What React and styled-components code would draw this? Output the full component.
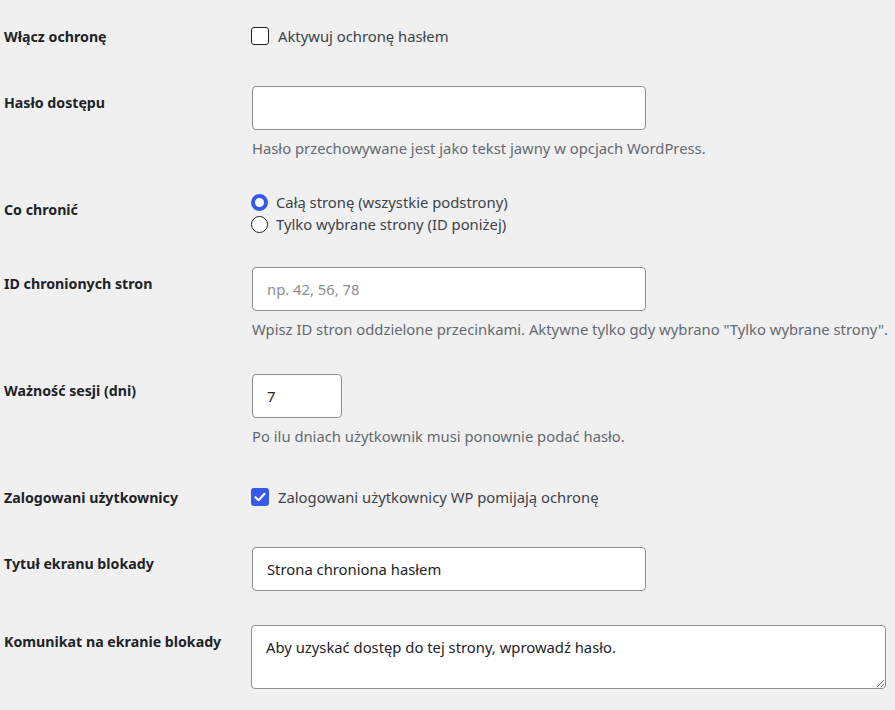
import React from "react";
import styled, { createGlobalStyle } from "styled-components";

const GlobalStyle = createGlobalStyle`
  html, body {
    margin: 0;
    padding: 0;
    background: #f0f0f1;
  }
  body {
    font-family: "Noto Sans", "Open Sans", sans-serif;
    font-size: 14.8px;
    color: #3c434a;
  }
`;

const Form = styled.div`
  padding: 5px 0 0 4px;
`;

const Row = styled.div`
  display: grid;
  grid-template-columns: 248px 1fr;
  align-items: start;
`;

const Label = styled.div`
  padding-top: 22px;
  font-weight: 700;
  font-size: 14.2px;
  line-height: 20px;
  color: #1d2327;
`;

const Field = styled.div`
  padding: 15px 9px 19px 0;
  display: flex;
  flex-direction: column;
`;

const TextInput = styled.input`
  box-sizing: border-box;
  width: ${(p) => p.$w || 394}px;
  height: 44px;
  padding: 0 14px;
  border: 1px solid #8c8f94;
  border-radius: 4px;
  background: #fff;
  font-family: inherit;
  font-size: 14.8px;
  color: #1d2327;
  outline: none;
  &::placeholder {
    color: #8c8f94;
  }
`;

const TextArea = styled.textarea`
  box-sizing: border-box;
  width: 635px;
  height: 64px;
  margin-left: -1px;
  padding: 11px 14px;
  border: 1px solid #8c8f94;
  border-radius: 4px;
  background: #fff;
  font-family: inherit;
  font-size: 14.8px;
  line-height: 21px;
  color: #1d2327;
  outline: none;
`;

const Description = styled.p`
  margin: 8px 0 0;
  font-size: 14.8px;
  line-height: 21px;
  color: #646970;
  white-space: nowrap;
`;

const CheckLine = styled.label`
  display: flex;
  align-items: center;
  gap: 9px;
  height: 32px;
  margin-left: -1px;
  line-height: 20px;
  color: #3c434a;
`;

const Box = styled.span`
  box-sizing: border-box;
  width: 18px;
  height: 18px;
  border-radius: 3px;
  border: ${(p) => (p.$on ? "none" : "1.5px solid #1d2327")};
  background: ${(p) => (p.$on ? "#3858e9" : "#fff")};
  display: flex;
  align-items: center;
  justify-content: center;
  flex: none;
`;

const RadioGroup = styled.div`
  display: flex;
  flex-direction: column;
  gap: 4px;
`;

const RadioLine = styled.label`
  display: flex;
  align-items: center;
  gap: 8px;
  height: 18px;
  margin-left: -1px;
  line-height: 18px;
  color: #3c434a;
`;

const Dot = styled.span`
  box-sizing: border-box;
  width: 17px;
  height: 17px;
  border-radius: 50%;
  background: #fff;
  border: ${(p) => (p.$on ? "4.5px solid #3858e9" : "1.5px solid #1d2327")};
  flex: none;
`;

function Checkbox({ checked, children }) {
  return (
    <CheckLine>
      <Box $on={checked}>
        {checked && (
          <svg width="12" height="10" viewBox="0 0 12 10">
            <path
              d="M1.5 5.2 L4.6 8.2 L10.5 1.8"
              fill="none"
              stroke="#fff"
              strokeWidth="2.2"
              strokeLinecap="round"
              strokeLinejoin="round"
            />
          </svg>
        )}
      </Box>
      {children}
    </CheckLine>
  );
}

export default function App() {
  return (
    <>
      <GlobalStyle />
      <Form>
        <Row>
          <Label>Włącz ochronę</Label>
          <Field>
            <Checkbox>Aktywuj ochronę hasłem</Checkbox>
          </Field>
        </Row>

        <Row>
          <Label>Hasło dostępu</Label>
          <Field>
            <TextInput type="text" defaultValue="" />
            <Description>
              Hasło przechowywane jest jako tekst jawny w opcjach WordPress.
            </Description>
          </Field>
        </Row>

        <Row>
          <Label>Co chronić</Label>
          <Field>
            <RadioGroup>
              <RadioLine>
                <Dot $on />
                Całą stronę (wszystkie podstrony)
              </RadioLine>
              <RadioLine>
                <Dot />
                Tylko wybrane strony (ID poniżej)
              </RadioLine>
            </RadioGroup>
          </Field>
        </Row>

        <Row>
          <Label>ID chronionych stron</Label>
          <Field>
            <TextInput type="text" placeholder="np. 42, 56, 78" />
            <Description>
              Wpisz ID stron oddzielone przecinkami. Aktywne tylko gdy wybrano
              "Tylko wybrane strony".
            </Description>
          </Field>
        </Row>

        <Row>
          <Label>Ważność sesji (dni)</Label>
          <Field>
            <TextInput type="text" $w={90} defaultValue="7" />
            <Description>Po ilu dniach użytkownik musi ponownie podać hasło.</Description>
          </Field>
        </Row>

        <Row>
          <Label>Zalogowani użytkownicy</Label>
          <Field>
            <Checkbox checked>Zalogowani użytkownicy WP pomijają ochronę</Checkbox>
          </Field>
        </Row>

        <Row>
          <Label>Tytuł ekranu blokady</Label>
          <Field>
            <TextInput type="text" defaultValue="Strona chroniona hasłem" />
          </Field>
        </Row>

        <Row>
          <Label>Komunikat na ekranie blokady</Label>
          <Field>
            <TextArea defaultValue="Aby uzyskać dostęp do tej strony, wprowadź hasło." />
          </Field>
        </Row>
      </Form>
    </>
  );
}
